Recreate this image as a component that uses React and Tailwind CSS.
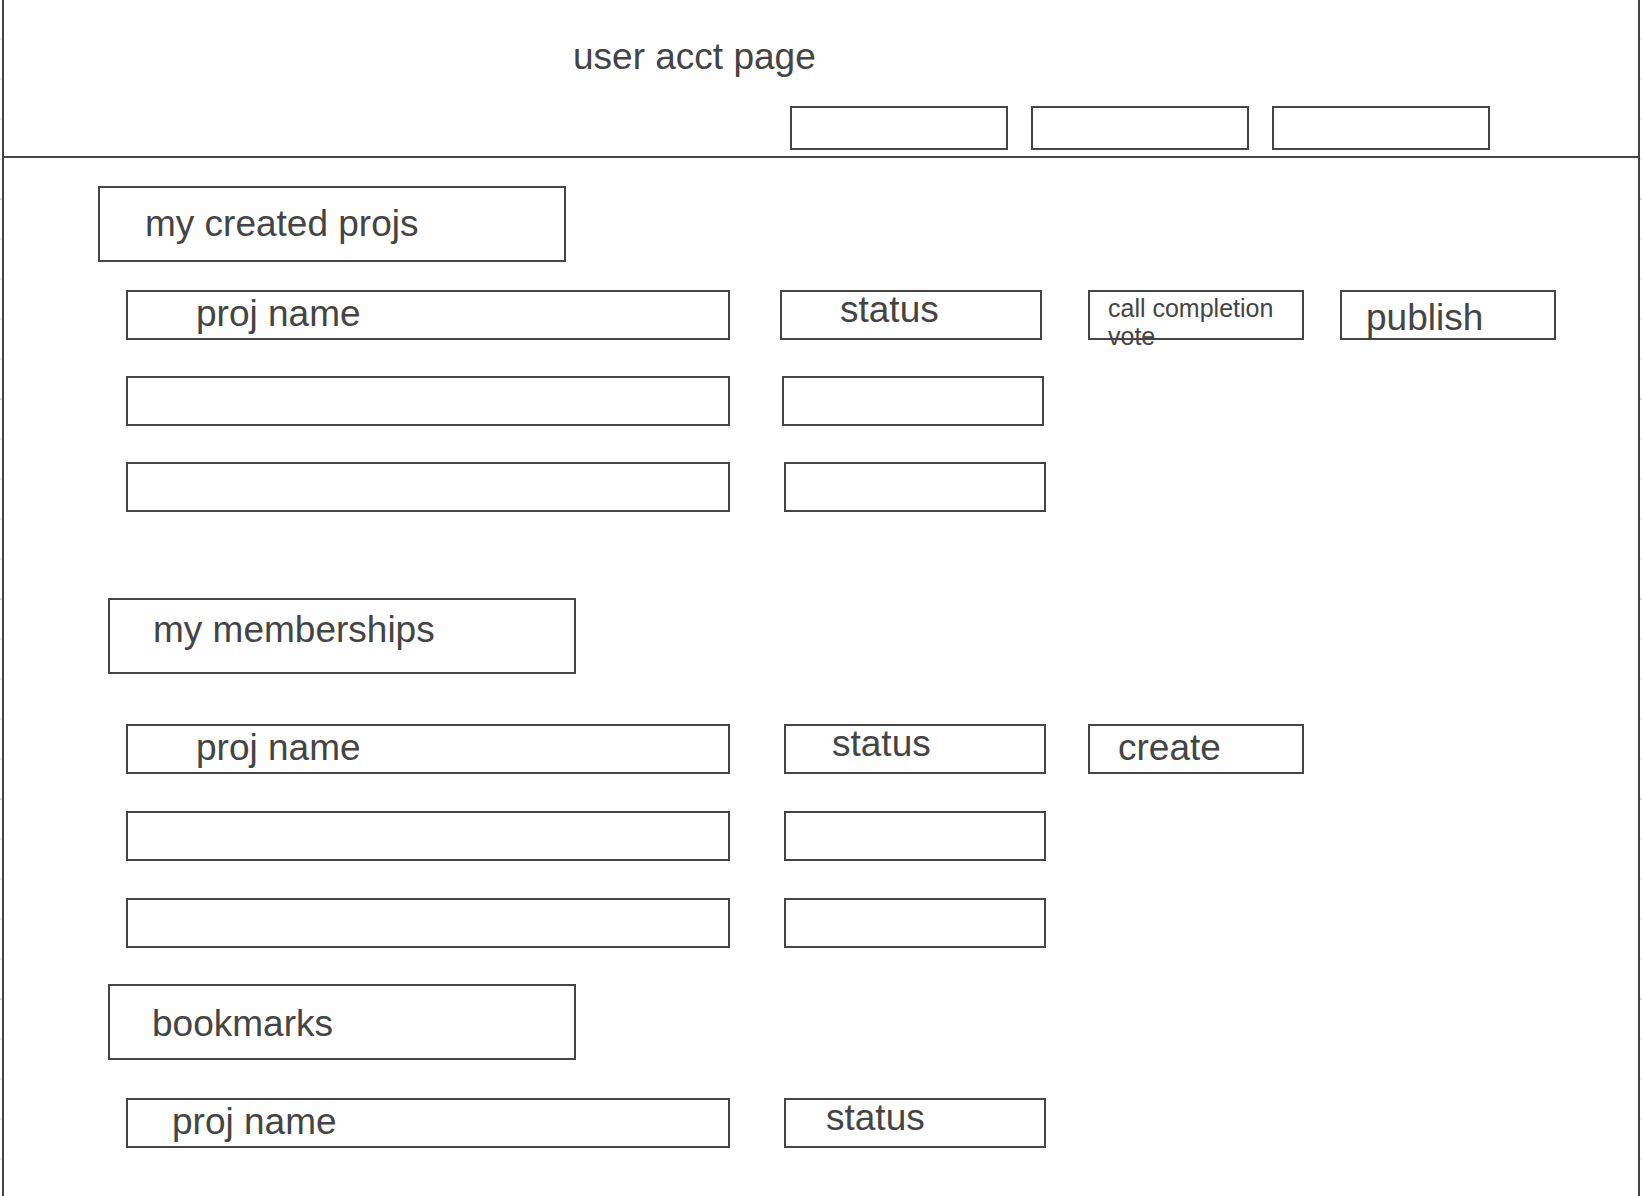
const BOX = "border-2 border-[#444] bg-[#fefefe]";

function Heading({ children, className }) {
  return (
    <h2 className={`${BOX} flex h-[76px] w-[468px] max-w-full items-start ${className}`}>
      {children}
    </h2>
  );
}

function Row({ children }) {
  return (
    <li className="grid grid-cols-[minmax(0,658fr)_minmax(0,304fr)_minmax(0,252fr)_minmax(0,216fr)]">
      {children}
    </li>
  );
}

function Name({ children, className = "" }) {
  return <div className={`${BOX} mr-[54px] h-[50px] pt-[5px] ${className}`}>{children}</div>;
}

function Status({ children, className = "mr-[42px]" }) {
  return <div className={`${BOX} h-[50px] pt-px ${className}`}>{children}</div>;
}

function Action({ children, className }) {
  return (
    <button type="button" className={`${BOX} flex h-[50px] items-start text-left ${className}`}>
      {children}
    </button>
  );
}

export default function App() {
  return (
    <div className="min-h-screen bg-[#fefefe] bg-[repeating-linear-gradient(to_bottom,transparent_0px,transparent_198px,#dcdcdc_198px,#dcdcdc_200px),repeating-linear-gradient(to_bottom,transparent_0px,transparent_38px,#eeeeee_38px,#eeeeee_40px)] px-0.5 font-['Liberation_Sans',Arial,sans-serif] text-[37px] leading-[34px] text-[#444]">
      <div className="min-h-screen border-x-2 border-[#444] bg-[#fefefe]">
        <header className="border-b-2 border-[#444] pt-10 pb-1.5">
          <h1 className="pl-[569px]">user acct page</h1>
          <nav className="mt-8 flex justify-end gap-[23px] pr-[148px]">
            <a href="#projects" aria-label="Projects" className={`${BOX} h-11 w-[218px]`} />
            <a href="#memberships" aria-label="Memberships" className={`${BOX} h-11 w-[218px]`} />
            <a href="#bookmarks" aria-label="Bookmarks" className={`${BOX} h-11 w-[218px]`} />
          </nav>
        </header>

        <main className="pr-[82px] pb-12">
          <section id="projects" className="pt-7">
            <Heading className="ml-[94px] pt-[19px] pl-[45px]">my created projs</Heading>
            <ul className="mt-7 ml-[122px] flex flex-col gap-9">
              <Row>
                <Name className="pl-[68px]">proj name</Name>
                <Status className="mr-[46px] -ml-1 pl-[58px]">status</Status>
                <Action className="mr-9 pt-0.5 pl-[18px] text-[25px] leading-7">
                  call completion vote
                </Action>
                <Action className="pt-[9px] pl-6">publish</Action>
              </Row>
              <Row>
                <Name />
                <Status className="mr-11 -ml-0.5" />
              </Row>
              <Row>
                <Name />
                <Status />
              </Row>
            </ul>
          </section>

          <section id="memberships" className="pt-[86px]">
            <Heading className="ml-[104px] pt-[13px] pl-[43px]">my memberships</Heading>
            <ul className="mt-[50px] ml-[122px] flex flex-col gap-[37px]">
              <Row>
                <Name className="pl-[68px]">proj name</Name>
                <Status className="mr-[42px] pl-[46px]">status</Status>
                <Action className="mr-9 pt-[5px] pl-7">create</Action>
              </Row>
              <Row>
                <Name />
                <Status />
              </Row>
              <Row>
                <Name />
                <Status />
              </Row>
            </ul>
          </section>

          <section id="bookmarks" className="pt-9">
            <Heading className="ml-[104px] pt-[21px] pl-[42px]">bookmarks</Heading>
            <ul className="mt-[38px] ml-[122px]">
              <Row>
                <Name className="pl-11">proj name</Name>
                <Status className="mr-[42px] pl-10">status</Status>
              </Row>
            </ul>
          </section>
        </main>
      </div>
    </div>
  );
}
